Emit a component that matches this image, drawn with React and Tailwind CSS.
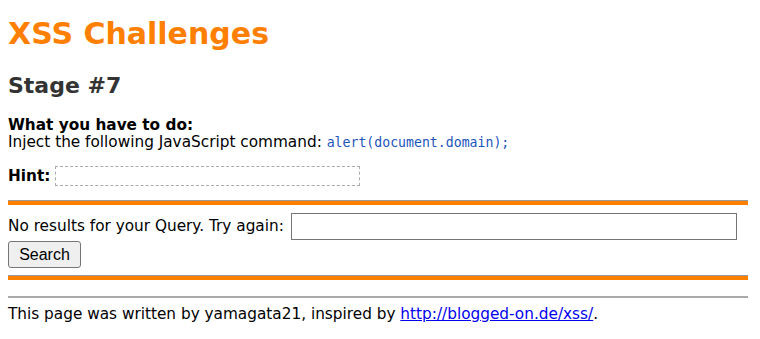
import React from 'react';

const OrangeRule = () => (
  <div className="h-[5px] w-[740px] border-t border-[#999] bg-[#ff8000]" />
);

const App = () => {
  return (
    <div className="min-h-[339px] bg-white px-2 text-[15.3px] leading-[17px] text-black font-['DejaVu_Sans',Verdana,sans-serif]">
      <h1 className="pt-[17px] text-[30px] font-bold leading-[34px] text-[#ff8000]">XSS Challenges</h1>
      <h2 className="mt-[22px] text-[22px] font-bold leading-[26px] text-[#333]">Stage #7</h2>

      <div className="mt-[18px]">
        <div className="font-bold">What you have to do:</div>
        <div>
          Inject the following JavaScript command:{' '}
          <code className="font-['DejaVu_Sans_Mono',monospace] text-[13.2px] text-[#2255bb]">alert(document.domain);</code>
        </div>
      </div>

      <div className="mt-[15px] flex items-center gap-[5px]">
        <span className="font-bold">Hint:</span>
        <span className="h-[20px] w-[305px] border border-dashed border-[#aaa]" />
      </div>

      <div className="mt-[14px]">
        <OrangeRule />
      </div>

      <form className="mt-[8px]" onSubmit={(e) => e.preventDefault()}>
        <div className="flex items-center gap-[7px]">
          <span>No results for your Query. Try again:</span>
          <input
            type="text"
            className="h-[27px] w-[446px] border border-[#767676] bg-white px-1 outline-none"
          />
        </div>
        <button
          type="submit"
          className="mt-px h-[27px] w-[73px] rounded-[3px] border border-[#767676] bg-[#efefef] font-['Liberation_Sans',Arial,sans-serif] text-[16px] text-black"
        >
          Search
        </button>
      </form>

      <div className="mt-[7px]">
        <OrangeRule />
      </div>

      <hr className="mt-[16px] w-[740px] border-t-2 border-[#aaa]" />

      <p className="mt-[8px]">
        This page was written by yamagata21, inspired by{' '}
        <a href="#" className="text-[#0000ee] underline">http://blogged-on.de/xss/</a>.
      </p>
    </div>
  );
};

export default App;
